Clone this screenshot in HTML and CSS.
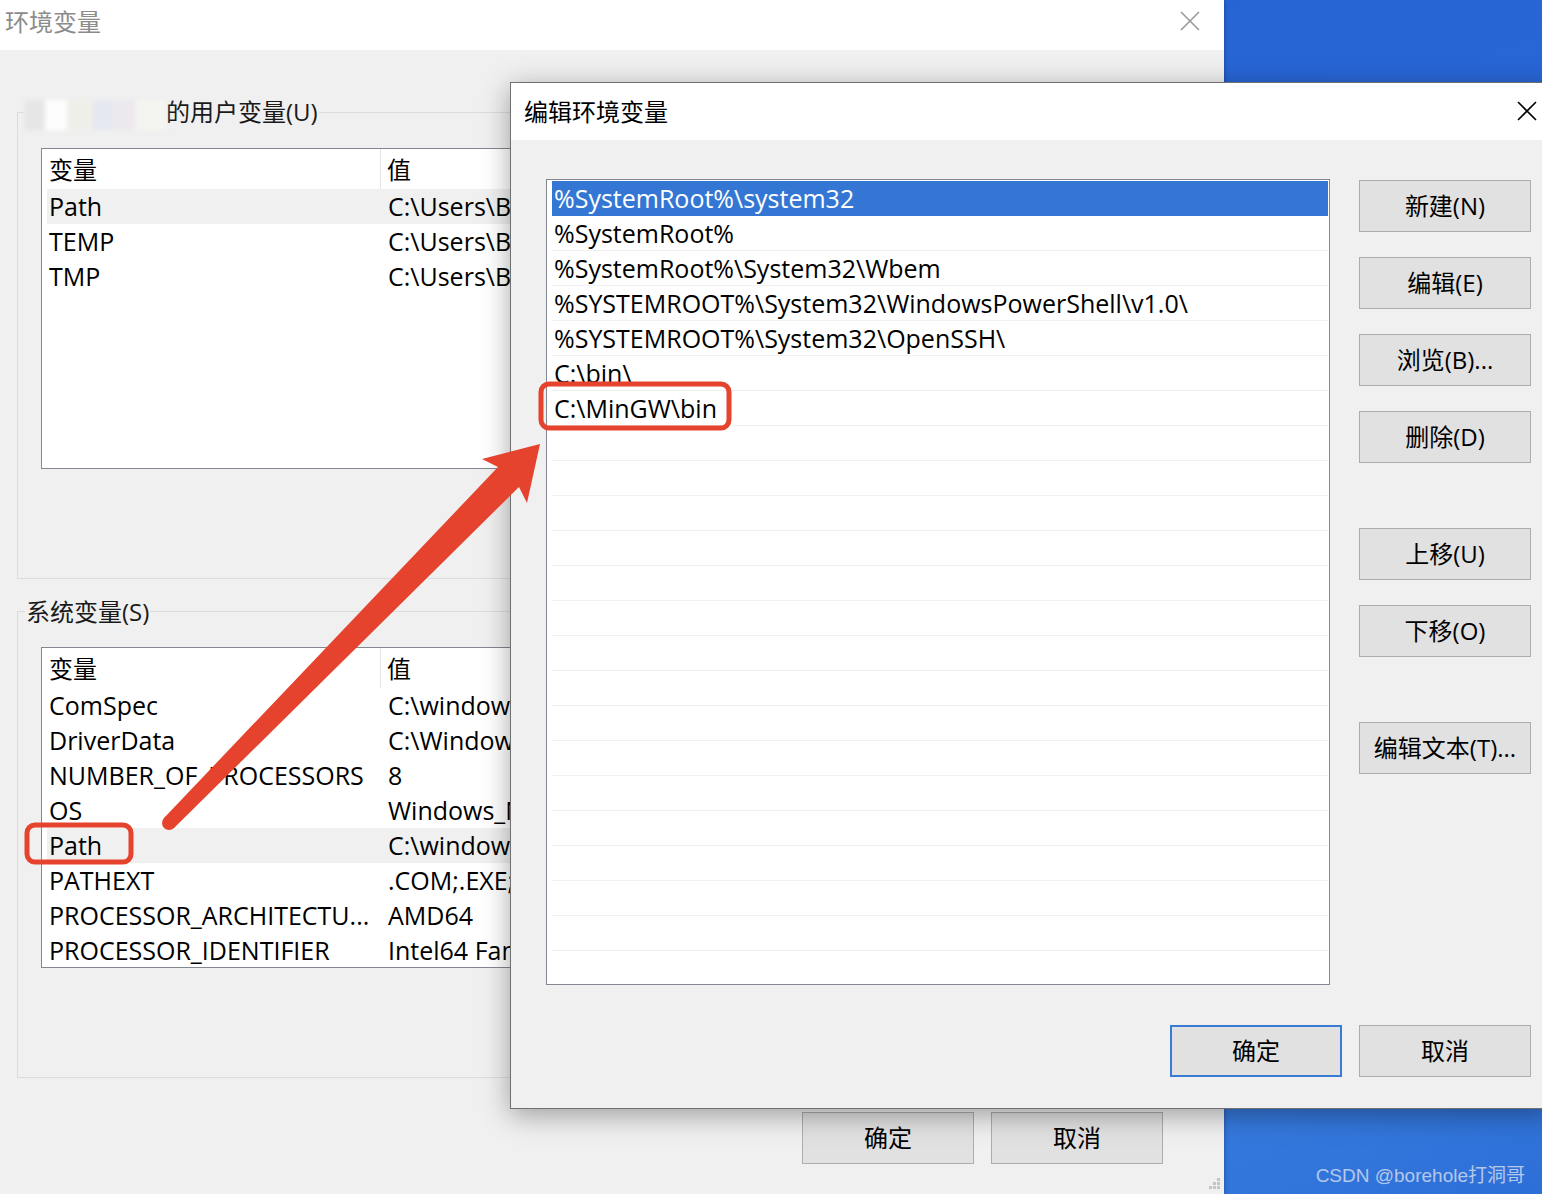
FILE: index.html
```html
<!DOCTYPE html>
<html lang="zh-CN">
  <head>
    <meta charset="UTF-8" />
    <title>环境变量</title>
    <link rel="stylesheet" href="styles.css">
  </head>
  <body>
    <div class="desktop">
      <div class="env-window">
        <div class="titlebar">
          <span class="title">环境变量</span>
          <svg class="close-icon faded" viewBox="0 0 20 20" width="20" height="20">
            <path d="M1 1 L19 19 M19 1 L1 19" />
          </svg>
        </div>

        <div class="env-body">
          <fieldset class="group">
            <legend><span class="masked"></span>的用户变量(U)</legend>
            <div class="var-list">
              <div class="var-head">
                <span class="col-name">变量</span>
                <span class="col-value">值</span>
              </div>
              <div class="var-row current">
                <span class="col-name">Path</span>
                <span class="col-value">C:\Users\BOREHOLE\AppData\Local\Microsoft\WindowsApps;</span>
              </div>
              <div class="var-row">
                <span class="col-name">TEMP</span>
                <span class="col-value">C:\Users\BOREHOLE\AppData\Local\Temp</span>
              </div>
              <div class="var-row">
                <span class="col-name">TMP</span>
                <span class="col-value">C:\Users\BOREHOLE\AppData\Local\Temp</span>
              </div>
            </div>
          </fieldset>

          <fieldset class="group system">
            <legend>系统变量(S)</legend>
            <div class="var-list">
              <div class="var-head">
                <span class="col-name">变量</span>
                <span class="col-value">值</span>
              </div>
              <div class="var-row">
                <span class="col-name">ComSpec</span>
                <span class="col-value">C:\windows\system32\cmd.exe</span>
              </div>
              <div class="var-row">
                <span class="col-name">DriverData</span>
                <span class="col-value">C:\Windows\System32\Drivers\DriverData</span>
              </div>
              <div class="var-row">
                <span class="col-name">NUMBER_OF_PROCESSORS</span>
                <span class="col-value">8</span>
              </div>
              <div class="var-row">
                <span class="col-name">OS</span>
                <span class="col-value">Windows_NT</span>
              </div>
              <div class="var-row current">
                <span class="col-name">Path</span>
                <span class="col-value">C:\windows\system32;C:\windows;</span>
              </div>
              <div class="var-row">
                <span class="col-name">PATHEXT</span>
                <span class="col-value">.COM;.EXE;.BAT;.CMD;.VBS</span>
              </div>
              <div class="var-row">
                <span class="col-name">PROCESSOR_ARCHITECTU...</span>
                <span class="col-value">AMD64</span>
              </div>
              <div class="var-row">
                <span class="col-name">PROCESSOR_IDENTIFIER</span>
                <span class="col-value">Intel64 Family 6 Model 142</span>
              </div>
            </div>
          </fieldset>

          <div class="env-actions">
            <button>确定</button>
            <button>取消</button>
          </div>
        </div>

        <svg class="grip" viewBox="0 0 16 16" width="16" height="16">
          <rect x="12" y="4" width="3" height="3" />
          <rect x="8" y="8" width="3" height="3" />
          <rect x="12" y="8" width="3" height="3" />
          <rect x="4" y="12" width="3" height="3" />
          <rect x="8" y="12" width="3" height="3" />
          <rect x="12" y="12" width="3" height="3" />
        </svg>
      </div>

      <div class="edit-dialog">
        <div class="dialog-titlebar">
          <span class="dialog-title">编辑环境变量</span>
          <svg class="close-icon" viewBox="0 0 20 20" width="20" height="20">
            <path d="M1 1 L19 19 M19 1 L1 19" />
          </svg>
        </div>

        <div class="dialog-body">
          <ul class="path-list">
            <li class="selected">%SystemRoot%\system32</li>
            <li>%SystemRoot%</li>
            <li>%SystemRoot%\System32\Wbem</li>
            <li>%SYSTEMROOT%\System32\WindowsPowerShell\v1.0\</li>
            <li>%SYSTEMROOT%\System32\OpenSSH\</li>
            <li>C:\bin\</li>
            <li>C:\MinGW\bin</li>
            <li></li><li></li><li></li><li></li><li></li><li></li><li></li><li></li>
            <li></li><li></li><li></li><li></li><li></li><li></li><li></li><li></li>
          </ul>

          <div class="side-buttons">
            <button>新建(N)</button>
            <button>编辑(E)</button>
            <button>浏览(B)...</button>
            <button>删除(D)</button>
            <button class="spaced">上移(U)</button>
            <button>下移(O)</button>
            <button class="spaced">编辑文本(T)...</button>
          </div>
        </div>

        <div class="dialog-footer">
          <button class="default">确定</button>
          <button>取消</button>
        </div>
      </div>

      <!-- red markup drawn over the screenshot -->
      <svg class="annotations" viewBox="0 0 1542 1194" width="1542" height="1194">
        <rect x="27" y="825" width="104" height="37" rx="8" />
        <rect x="541" y="384" width="188" height="44" rx="8" />
        <circle cx="169" cy="823" r="7" />
        <polygon class="arrow" points="164,818 498,467 482,459 540,444 527,503 519,487 174,828" />
      </svg>

      <div class="watermark">CSDN @borehole打洞哥</div>
    </div>
  </body>
</html>
```

FILE: styles.css
```css
* {
  box-sizing: border-box;
}

body {
  margin: 0;
  width: 1542px;
  height: 1194px;
  overflow: hidden;
  font-family: "Open Sans", "Noto Sans CJK SC", sans-serif;
  font-size: 24px;
  color: #000;
}

.desktop {
  position: relative;
  width: 1542px;
  height: 1194px;
  overflow: hidden;
  background: linear-gradient(160deg, #2461d3 0%, #2a69d8 55%, #3b80e0 82%, #2d6fd8 100%);
}

/* back window */
.env-window {
  position: relative;
  width: 1224px;
  height: 1194px;
  background: #f0f0f0;
  display: flex;
  flex-direction: column;
  box-shadow: 1px 0 4px rgba(0, 0, 0, 0.25);
}

.titlebar {
  height: 50px;
  background: #fff;
  display: flex;
  align-items: center;
  justify-content: space-between;
  padding: 0 24px 9px 5px;
}

.title {
  color: #8c8c8c;
  font-family: "Noto Sans CJK SC", sans-serif;
}

.close-icon {
  stroke: #000;
  stroke-width: 1.6;
  fill: none;
}

.close-icon.faded {
  stroke: #999;
}

.env-body {
  flex: 1;
  padding: 45px 19px 0 17px;
}

.group {
  margin: 0;
  padding: 0;
  min-width: 0;
  border: 1px solid #dcdcdc;
}

.group.system {
  margin-top: 16px;
}

.group legend {
  margin-left: 7px;
  padding: 0 1px;
  line-height: 34px;
  color: #1a1a1a;
}

.masked {
  display: inline-block;
  width: 141px;
  height: 30px;
  vertical-align: middle;
  margin-left: -1px;
  background: linear-gradient(90deg, #e6e6e6 0 14%, #fdfdfd 14% 30%, #efefea 30% 48%, #e4e8ef 48% 62%, #ece8ee 62% 78%, #f4f4f0 78% 100%);
  filter: blur(2px);
}

.var-list {
  margin: 18px 23px 109px 23px;
  height: 321px;
  border: 1px solid #828790;
  background: #fff;
  overflow: hidden;
}

.var-head {
  height: 40px;
  display: flex;
  align-items: center;
  font-family: "Noto Sans CJK SC", sans-serif;
}

.var-head .col-name {
  width: 339px;
  height: 40px;
  line-height: 40px;
  padding-left: 7px;
  border-right: 1px solid #e5e5e5;
}

.var-head .col-value {
  padding-left: 6px;
}

.var-row {
  height: 35px;
  margin-left: 5px;
  display: flex;
  align-items: center;
  white-space: nowrap;
  font-size: 25px;
}

.var-row.current {
  background: #f0f0f0;
}

.var-row .col-name {
  width: 334px;
  padding-left: 2px;
}

.var-row .col-value {
  padding-left: 7px;
}

.env-actions {
  display: flex;
  justify-content: flex-end;
  gap: 17px;
  margin-top: 34px;
  padding-right: 42px;
}

button {
  width: 172px;
  height: 52px;
  padding: 0 0 3px;
  background: #e1e1e1;
  border: 1px solid #adadad;
  font-family: "Open Sans", "Noto Sans CJK SC", sans-serif;
  font-size: 24px;
  color: #000;
}

.grip {
  position: absolute;
  right: 3px;
  bottom: 4px;
  fill: #c4c4c4;
}

/* front dialog */
.edit-dialog {
  position: absolute;
  left: 510px;
  top: 82px;
  width: 1040px;
  height: 1027px;
  background: #f0f0f0;
  border: 1px solid #707070;
  box-shadow: 0 6px 26px rgba(0, 0, 0, 0.35);
}

.dialog-titlebar {
  height: 57px;
  background: #fff;
  display: flex;
  align-items: center;
  justify-content: space-between;
  padding: 0 12px 2px 13px;
}

.dialog-title {
  font-family: "Noto Sans CJK SC", sans-serif;
}

.dialog-body {
  display: flex;
  gap: 29px;
  padding: 39px 18px 0 35px;
}

.path-list {
  width: 784px;
  height: 806px;
  margin: 0;
  padding: 1px 1px 0 5px;
  list-style: none;
  border: 1px solid #828790;
  background: #fff;
  overflow: hidden;
  font-size: 25px;
}

.path-list li {
  height: 35px;
  line-height: 34px;
  padding-left: 2px;
  border-bottom: 1px solid #f0f0f0;
  white-space: nowrap;
  overflow: hidden;
}

.path-list li.selected {
  background: #3476d3;
  border-bottom-color: #3476d3;
  color: #fff;
}

.side-buttons {
  display: flex;
  flex-direction: column;
  gap: 25px;
  padding-top: 1px;
}

.side-buttons .spaced {
  margin-top: 40px;
}

.dialog-footer {
  display: flex;
  justify-content: flex-end;
  gap: 17px;
  margin-top: 40px;
  padding-right: 18px;
}

.dialog-footer .default {
  border: 2px solid #3a7bd5;
}

.annotations {
  position: absolute;
  left: 0;
  top: 0;
  pointer-events: none;
}

.annotations rect {
  fill: none;
  stroke: #e5432d;
  stroke-width: 5;
}

.annotations circle,
.annotations .arrow {
  fill: #e5432d;
}

.watermark {
  position: absolute;
  right: 17px;
  bottom: 7px;
  font-family: "Liberation Sans", "Noto Sans CJK SC", sans-serif;
  font-size: 19px;
  color: rgba(225, 230, 240, 0.75);
}
```
